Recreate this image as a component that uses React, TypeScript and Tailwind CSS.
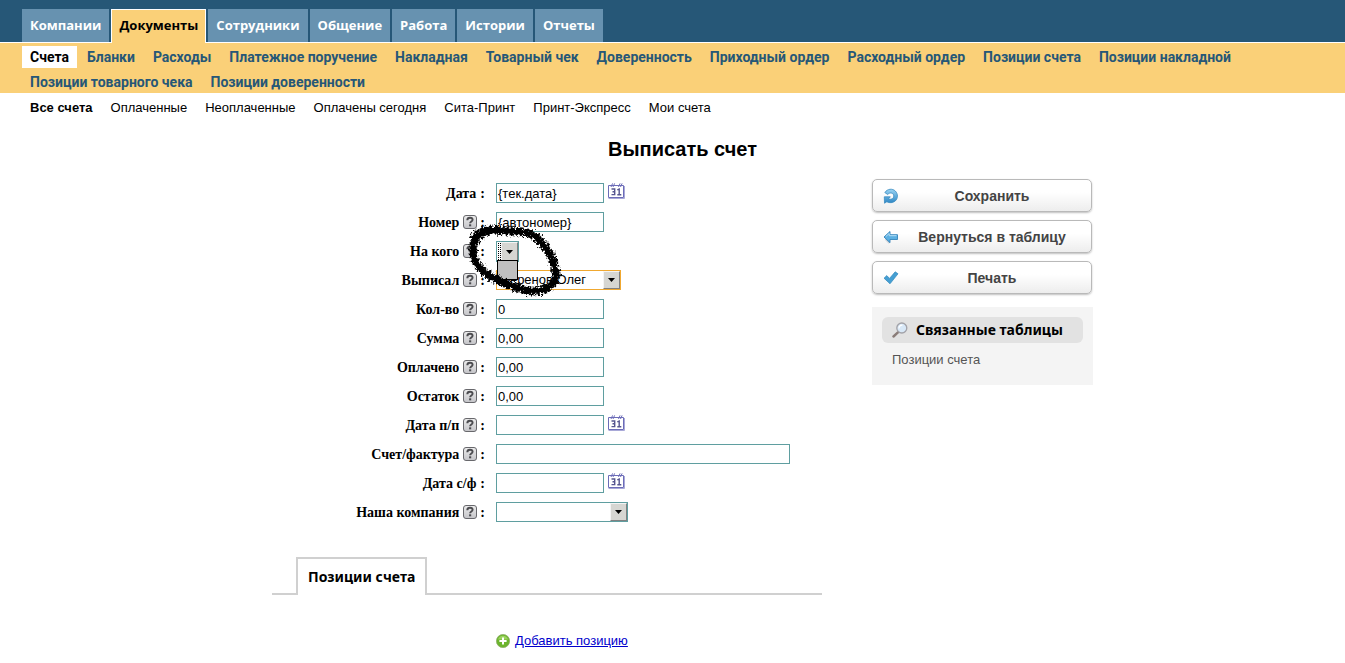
import React from 'react';

const sections = ['Компании', 'Документы', 'Сотрудники', 'Общение', 'Работа', 'Истории', 'Отчеты'];

const tables = [
  'Счета', 'Бланки', 'Расходы', 'Платежное поручение', 'Накладная', 'Товарный чек', 'Доверенность',
  'Приходный ордер', 'Расходный ордер', 'Позиции счета', 'Позиции накладной', 'Позиции товарного чека',
  'Позиции доверенности',
];

const filters = ['Все счета', 'Оплаченные', 'Неоплаченные', 'Оплачены сегодня', 'Сита-Принт', 'Принт-Экспресс', 'Мои счета'];

type Field = {
  id: string;
  label: string;
  help?: boolean;
  kind: 'text' | 'date' | 'wide' | 'customer' | 'author' | 'company';
  value?: string;
};

const fields: Field[] = [
  { id: 'date', label: 'Дата', kind: 'date', value: '{тек.дата}' },
  { id: 'number', label: 'Номер', help: true, kind: 'text', value: '{автономер}' },
  { id: 'customer', label: 'На кого', help: true, kind: 'customer' },
  { id: 'author', label: 'Выписал', help: true, kind: 'author', value: 'Шеренов Олег' },
  { id: 'count', label: 'Кол-во', help: true, kind: 'text', value: '0' },
  { id: 'sum', label: 'Сумма', help: true, kind: 'text', value: '0,00' },
  { id: 'paid', label: 'Оплачено', help: true, kind: 'text', value: '0,00' },
  { id: 'rest', label: 'Остаток', help: true, kind: 'text', value: '0,00' },
  { id: 'orderDate', label: 'Дата п/п', help: true, kind: 'date' },
  { id: 'invoice', label: 'Счет/фактура', help: true, kind: 'wide' },
  { id: 'invoiceDate', label: 'Дата с/ф', kind: 'date' },
  { id: 'company', label: 'Наша компания', help: true, kind: 'company' },
];

function HelpIcon() {
  return (
    <svg width="14" height="14" viewBox="0 0 14 14" className="shrink-0" aria-hidden="true">
      <defs>
        <linearGradient id="helpFill" x1="0" y1="0" x2="0" y2="1">
          <stop offset="0" stopColor="#ececec" />
          <stop offset="1" stopColor="#c4c4c8" />
        </linearGradient>
      </defs>
      <rect x="0.5" y="0.5" width="13" height="13" rx="2.5" fill="url(#helpFill)" stroke="#68686c" />
      <path d="M4.3 5.2c0-1.700 1.100-2.500 2.700-2.500s2.600.8 2.600 2.100c0 1.700-2.500 1.700-2.500 3.500" fill="none" stroke="#4c4c50" strokeWidth="1.900" />
      <rect x="6.100" y="9.300" width="2.100" height="2" fill="#4c4c50" />
    </svg>
  );
}

function CalendarIcon() {
  return (
    <svg width="17" height="16" viewBox="0 0 17 16" className="block" aria-hidden="true">
      <path d="M0.5 2.500h15v12h-15z" fill="#fff" stroke="#6c6cb8" />
      <path d="M0.500 15.500h16V3" fill="none" stroke="#a9a9d8" />
      <path d="M3 4l1.600-3.600M5 4l1.600-3.600M10.500 4l1.600-3.600M12.500 4l1.600-3.600" stroke="#6c6cb8" />
      <path d="M3.500 6h3.200v5.600H3.500M4.500 8.800h2" fill="none" stroke="#55558f" strokeWidth="1.400" />
      <path d="M9.300 6.800L11.200 6v5.600M9.300 11.700h4" fill="none" stroke="#55558f" strokeWidth="1.400" />
    </svg>
  );
}

function SaveIcon() {
  return (
    <svg width="16" height="16" viewBox="0 0 16 16" aria-hidden="true">
      <defs>
        <linearGradient id="saveFill" x1="0" y1="0" x2="0" y2="1">
          <stop offset="0" stopColor="#9ad4f4" />
          <stop offset="1" stopColor="#2c86c4" />
        </linearGradient>
      </defs>
      <path
        d="M1.800 4.500C4.500.6 9.500.300 12.300 3C15.300 6 15 10.500 12.300 12.900C9.800 15 6.500 15.200 3.800 13.800L1.500 15.200L1.300 8.800H7.300L5.600 10.800C7.300 11.800 10.800 11 10.800 8C10.800 5 7 3.900 4.700 6.500Z"
        fill="url(#saveFill)"
        stroke="#3a8cc0"
        strokeWidth=".8"
      />
    </svg>
  );
}

function BackIcon() {
  return (
    <svg width="16" height="16" viewBox="0 0 16 16" aria-hidden="true">
      <path d="M6.500 14l-4-4" stroke="#d0d4d8" strokeWidth="2" />
      <path d="M1 8l6-5.500V5.700h7.500v4.800H7v3.200z" fill="#5cb0e2" stroke="#3585bb" strokeWidth=".9" />
      <path d="M2.800 7.600L6.200 4.500v2.200h7.300" fill="none" stroke="#b5def5" />
    </svg>
  );
}

function CheckIcon() {
  return (
    <svg width="16" height="16" viewBox="0 0 16 16" aria-hidden="true">
      <path d="M1 8.200l2.800-2.600 2.700 2.800 5.700-6.600L15 3.800 7 13.800z" fill="#459fd3" stroke="#2f86ba" strokeWidth=".7" />
    </svg>
  );
}

function SearchIcon() {
  return (
    <svg width="16" height="16" viewBox="0 0 16 16" aria-hidden="true">
      <path d="M1.500 14.500l4.700-4.300" stroke="#8a7c78" strokeWidth="2.400" strokeLinecap="round" />
      <circle cx="9.800" cy="6" r="5" fill="#d8e8f7" stroke="#a2a2a8" strokeWidth="1.300" />
      <path d="M7 6.500c0-2 1.500-3.300 3.400-3.300" fill="none" stroke="#fff" strokeWidth="1.200" />
    </svg>
  );
}

function AddIcon() {
  return (
    <svg width="14" height="14" viewBox="0 0 14 14" aria-hidden="true">
      <circle cx="7" cy="7" r="6.600" fill="#6cb52d" stroke="#8fae6a" strokeWidth=".8" />
      <path d="M2 5.500a5.200 5.200 0 0 1 10 0" fill="#9bd25f" />
      <path d="M7 3.400v7.200M3.400 7h7.200" stroke="#fff" strokeWidth="2" />
    </svg>
  );
}

function ArrowBox() {
  return (
    <span className="pointer-events-none absolute inset-y-px right-px flex w-[17px] items-center justify-center border border-t-[#f4f4f4] border-r-[#808080] border-b-[#808080] border-l-[#f4f4f4] bg-[#d6d6d2]">
      <svg width="7" height="4" viewBox="0 0 7 4" aria-hidden="true">
        <path d="M0 0h7L3.500 4z" fill="#000" />
      </svg>
    </span>
  );
}

/* Hand-drawn marker ring around the customer list. */
function Scribble() {
  const ring =
    'M5 19C12 8 24 8 36 10C48 10 60 10 69 17C79 26 87 40 88 53C88 64 78 70 64 70C50 69 34 61 24 56C12 50 4 38 5 27C6 18 12 12 22 9';
  return (
    <svg width="96" height="80" viewBox="0 0 96 80" className="pointer-events-none absolute -top-5 -left-7 z-20" aria-hidden="true">
      <defs>
        <filter id="marker" x="-10%" y="-10%" width="120%" height="120%">
          <feTurbulence type="fractalNoise" baseFrequency="0.45" numOctaves="2" seed="4" />
          <feDisplacementMap in="SourceGraphic" scale="7" xChannelSelector="R" yChannelSelector="G" />
        </filter>
      </defs>
      <g filter="url(#marker)" fill="none" stroke="#000">
        <path d={ring} strokeWidth="6" />
        <path d={ring} strokeWidth="9" strokeDasharray="2 1 1 2 3 1" />
      </g>
    </svg>
  );
}

const box = 'h-5 border border-[#5f9ea0] bg-white text-[13px] leading-4 text-black rounded-none outline-none';

function Control({ field }: { field: Field }) {
  if (field.kind === 'customer') {
    return (
      <div className="relative h-[21px] w-[23px]">
        <select id={field.id} className="block h-[21px] w-[23px] appearance-none border border-[#5f9ea0] bg-white outline-none">
          <option value=""></option>
        </select>
        <span className="pointer-events-none absolute inset-y-[2px] left-[2px] w-[3px] border border-dotted border-black" />
        <ArrowBox />
        <span className="absolute top-[19px] left-px z-10 h-5 w-[21px] border border-black bg-[#c0c0c0]" />
        <Scribble />
      </div>
    );
  }
  if (field.kind === 'author' || field.kind === 'company') {
    return (
      <div className={field.kind === 'author' ? 'relative w-[125px]' : 'relative w-[132px]'}>
        <select
          id={field.id}
          className={
            field.kind === 'author'
              ? 'block h-5 w-full appearance-none border border-[#f0a830] bg-white pl-px text-[13px] leading-4 text-black outline-none'
              : 'block h-5 w-full appearance-none border border-[#5f9ea0] bg-white pl-px text-[13px] leading-4 text-black outline-none'
          }
        >
          <option>{field.value ?? ''}</option>
        </select>
        <ArrowBox />
      </div>
    );
  }
  return (
    <div className="flex items-start gap-1">
      <input
        id={field.id}
        type="text"
        defaultValue={field.value ?? ''}
        className={field.kind === 'wide' ? `${box} w-[294px] px-px` : `${box} w-[108px] px-px`}
      />
      {field.kind === 'date' && (
        <button type="button" aria-label="Выбрать дату">
          <CalendarIcon />
        </button>
      )}
    </div>
  );
}

function ActionButton({ icon, children }: { icon: React.ReactNode; children: React.ReactNode }) {
  return (
    <button
      type="button"
      className="flex h-[33px] w-full items-center rounded-[5px] border border-[#b9b9b9] bg-linear-to-b from-white from-40% to-[#ededed] px-2.5 text-sm font-bold text-[#444] shadow-[0_1px_2px_rgba(0,0,0,0.25)]"
    >
      {icon}
      <span className="flex-1 pl-1">{children}</span>
    </button>
  );
}

export default function App() {
  return (
    <div className="bg-white pb-3 font-['Liberation_Sans',sans-serif] text-[13px] text-black">
      <header>
        <nav className="flex gap-0.5 border-b border-white bg-[#265777] px-[22px] pt-[9px] font-['Open_Sans',sans-serif] text-[13px] font-bold">
          {sections.map((name) => (
            <a
              key={name}
              href="#"
              className={
                name === 'Документы'
                  ? 'relative -mb-px h-[34px] border-x border-t border-white bg-[#fad078] px-[7px] leading-[30px] text-black'
                  : 'h-[33px] bg-[#6792b0] px-2 leading-8 text-white'
              }
            >
              {name}
            </a>
          ))}
        </nav>
        <nav className="flex flex-wrap gap-x-0.5 gap-y-[3px] bg-[#fad078] px-[22px] pt-[3px] font-['Roboto',sans-serif] text-sm font-bold">
          {tables.map((name) => (
            <a key={name} href="#" className={name === 'Счета' ? 'bg-white px-2 leading-[22px] text-black' : 'px-2 leading-[22px] text-[#265777]'}>
              {name}
            </a>
          ))}
        </nav>
        <nav className="flex flex-wrap gap-x-0.5 px-[22px] pt-[5px]">
          {filters.map((name) => (
            <a key={name} href="#" className={name === 'Все счета' ? 'px-2 leading-5 font-bold' : 'px-2 leading-5'}>
              {name}
            </a>
          ))}
        </nav>
      </header>

      <main className="pt-[19px] pl-5">
        <h1 className="text-center text-xl leading-6 font-bold">Выписать счет</h1>
        <div className="mx-auto flex max-w-[821px] items-start gap-[50px] pt-[18px]">
          <div className="min-w-0 flex-1">
            <form className="flex flex-col">
              {fields.map((field) => (
                <div key={field.id} className="flex h-[29px] items-start pt-1">
                  <label
                    htmlFor={field.id}
                    className="flex h-5 w-[213px] shrink-0 items-center justify-end gap-[3px] font-['Liberation_Serif',serif] text-sm leading-5 font-bold"
                  >
                    <span className="pt-0.5 pr-px">{field.label}</span>
                    {field.help && <HelpIcon />}
                    <span className="pt-0.5">:</span>
                  </label>
                  <div className="pl-[11px]">
                    <Control field={field} />
                  </div>
                </div>
              ))}
            </form>
            <div className="mt-[30px] flex border-b-2 border-[#d0d0d0] px-6">
              <button type="button" className="-mb-0.5 h-[38px] border-2 border-b-0 border-[#d0d0d0] bg-white px-2.5 font-['Noto_Sans',sans-serif] text-sm font-bold">
                Позиции счета
              </button>
            </div>
            <a href="#" className="mt-9 ml-56 inline-flex items-center gap-[5px] text-[13px] leading-5 text-[#0000cc]">
              <AddIcon />
              <span className="underline">Добавить позицию</span>
            </a>
          </div>

          <aside className="w-[221px] shrink-0">
            <div className="flex flex-col gap-2 pr-px">
              <ActionButton icon={<SaveIcon />}>Сохранить</ActionButton>
              <ActionButton icon={<BackIcon />}>Вернуться в таблицу</ActionButton>
              <ActionButton icon={<CheckIcon />}>Печать</ActionButton>
            </div>
            <section className="mt-[13px] bg-[#f4f4f4] px-2.5 pt-2.5 pb-[15px]">
              <h2 className="flex h-[26px] items-center gap-2 rounded-md bg-[#e2e2e2] px-2.5 font-['Noto_Sans',sans-serif] text-sm font-bold whitespace-nowrap">
                <SearchIcon />
                Связанные таблицы
              </h2>
              <a href="#" className="mt-[7px] block px-2.5 leading-5 text-[#555]">
                Позиции счета
              </a>
            </section>
          </aside>
        </div>
      </main>
    </div>
  );
}
